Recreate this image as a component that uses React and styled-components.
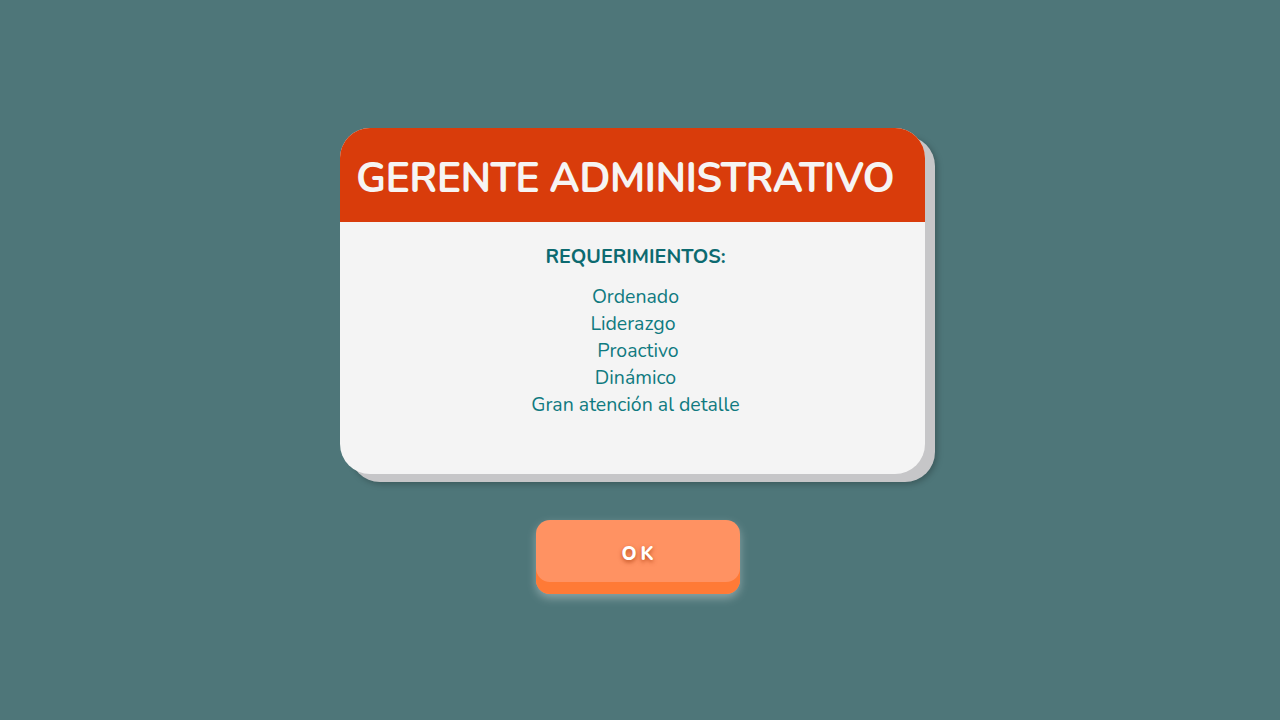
import styled, { createGlobalStyle } from "styled-components";

const GlobalStyle = createGlobalStyle`
  html, body {
    margin: 0;
    padding: 0;
    background: #4e7679;
    font-family: Nunito, "Noto Sans", Lato, sans-serif;
  }
`;

const Page = styled.div`
  width: 1280px;
  height: 720px;
  display: flex;
  flex-direction: column;
  align-items: center;
  padding-top: 128px;
  box-sizing: border-box;
`;

const Card = styled.div`
  width: 585px;
  height: 346px;
  margin-left: -15px;
  border-radius: 30px;
  background: #f4f4f4;
  overflow: hidden;
  display: flex;
  flex-direction: column;
  box-shadow: 10px 8px 0 #c6c6c8, 12px 10px 6px rgba(0, 0, 0, 0.25);
`;

const Header = styled.div`
  height: 94px;
  background: #d93c0b;
  display: flex;
  align-items: center;
  padding: 0 16px;
`;

const Title = styled.h1`
  margin: 0;
  color: #f6f4f3;
  font-size: 41px;
  font-weight: 700;
  letter-spacing: -0.7px;
  line-height: 1;
  padding-top: 6px;
`;

const Body = styled.div`
  display: flex;
  flex-direction: column;
  align-items: center;
  padding: 21px 0 0 6px;
  color: #0f7a80;
`;

const Subtitle = styled.h2`
  margin: 0 0 13px;
  font-size: 19.8px;
  font-weight: 700;
  color: #0c6a70;
`;

const List = styled.div`
  display: flex;
  flex-direction: column;
  align-items: center;
  font-size: 19.5px;
  line-height: 27px;
  white-space: pre;
`;

const ButtonWrap = styled.div`
  margin-top: 46px;
  margin-left: -5px;
`;

const OkButton = styled.button`
  width: 204px;
  height: 74px;
  border: none;
  border-radius: 14px;
  background: #ff9262;
  box-shadow: inset 0 -12px 0 #ff7a36, 0 4px 10px rgba(255, 255, 255, 0.35);
  color: #fff;
  font-family: inherit;
  font-size: 19px;
  font-weight: 800;
  letter-spacing: 4px;
  padding: 0 0 6px 4px;
  text-shadow: 0 2px 4px rgba(160, 50, 0, 0.7);
  cursor: pointer;
`;

const items = ["Ordenado", "Liderazgo ", " Proactivo", "Dinámico", "Gran atención al detalle"];

export default function App() {
  return (
    <>
      <GlobalStyle />
      <Page>
        <Card>
          <Header>
            <Title>GERENTE ADMINISTRATIVO</Title>
          </Header>
          <Body>
            <Subtitle>REQUERIMIENTOS:</Subtitle>
            <List>
              {items.map((item) => (
                <span key={item}>{item}</span>
              ))}
            </List>
          </Body>
        </Card>
        <ButtonWrap>
          <OkButton>OK</OkButton>
        </ButtonWrap>
      </Page>
    </>
  );
}
